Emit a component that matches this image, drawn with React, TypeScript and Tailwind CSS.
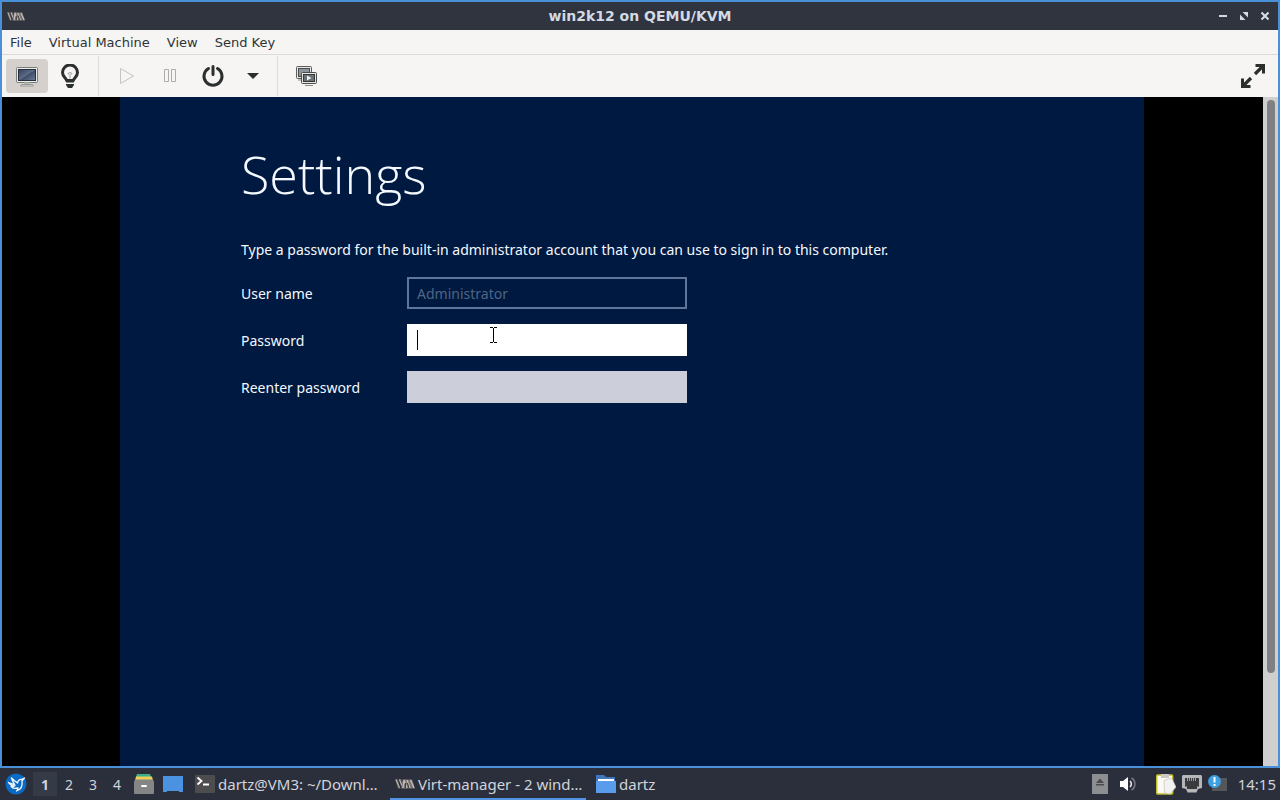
import { useState } from 'react'

const menus = ['File', 'Virtual Machine', 'View', 'Send Key']
const desktops = ['1', '2', '3', '4']

function VmLogo({ className }: { className?: string }) {
  return (
    <svg viewBox="0 0 20 12" className={className} fill="none" aria-hidden="true">
      <path d="M0 1.500h3l2 9h-2zM3.500 1h3l1 6V1.500h3v9h-3z" fill="#5f5b59" />
      <path d="M1 1.500 4.500 10M4.500 1.500 7 8" stroke="#b5b2af" strokeWidth="1.200" />
      <path d="M6 10.500 8 1.500h9l3 9z" fill="#77716d" />
      <path d="M8 10 9 2l3 8M12 2l3 8M15.500 2l3.500 8" stroke="#c3bfbc" strokeWidth="1.300" />
      <path d="M10.500 10V5M14 10.500 12.500 5" stroke="#3d3b3d" />
    </svg>
  )
}

function ConsoleIcon() {
  return (
    <svg viewBox="0 0 24 24" className="w-6 h-6" aria-hidden="true">
      <defs>
        <linearGradient id="screen" x1="0" y1="0" x2="1" y2="1">
          <stop offset="0" stopColor="#33435f" />
          <stop offset="0.5" stopColor="#5d6d86" />
          <stop offset="0.52" stopColor="#3c4c68" />
          <stop offset="1" stopColor="#6d7d96" />
        </linearGradient>
      </defs>
      <rect x="1.500" y="3.500" width="21" height="15" rx="1" fill="#e9eae8" stroke="#7b7d7a" />
      <rect x="3.500" y="5.500" width="17" height="11" fill="url(#screen)" stroke="#27303f" />
      <path d="M9 18.500h6v2H9z" fill="#b7b9b5" />
      <path d="M6.500 20.500h11l1 1.500h-13z" fill="#e2e3e1" stroke="#8a8c88" strokeWidth="0.8" />
    </svg>
  )
}

function BulbIcon() {
  return (
    <svg viewBox="0 0 24 24" className="w-6 h-6" fill="none" aria-hidden="true">
      <path d="M8.700 16.500C8.200 14 4.500 12.500 4.500 8.500a7.500 7.500 0 0 1 15 0c0 4-3.700 5.500-4.200 8z" stroke="#2b302f" strokeWidth="3" strokeLinejoin="round" />
      <path d="M10 9.500l2 2 2-2-2-1zM12 12v2.500" stroke="#8f9190" strokeWidth="0.900" />
      <path d="M8 17h8v1.500H8zM8 20h8v1l-2 3h-4l-2-3z" fill="#2b302f" />
    </svg>
  )
}

function PlayIcon() {
  return (
    <svg viewBox="0 0 24 24" className="w-6 h-6" fill="none" stroke="#c3c3c0" aria-hidden="true">
      <path d="M5.500 4.500v15L18.500 12z" />
    </svg>
  )
}

function PauseIcon() {
  return (
    <svg viewBox="0 0 24 24" className="w-6 h-6" fill="none" stroke="#acadaa" aria-hidden="true">
      <path d="M6.500 5.500h4v12h-4zM13.500 5.500h4v12h-4z" />
    </svg>
  )
}

function PowerIcon() {
  return (
    <svg viewBox="0 0 24 24" className="w-6 h-6" fill="none" stroke="#2b302f" strokeWidth="3" strokeLinecap="round" aria-hidden="true">
      <path d="M7.500 4.500a9 9 0 1 0 9 0M12 2.500v8" />
    </svg>
  )
}

function SnapshotsIcon() {
  return (
    <svg viewBox="0 0 24 24" className="w-6 h-6" aria-hidden="true">
      <rect x="2.500" y="2.500" width="15" height="12" rx="1" fill="#e6e7e5" stroke="#5b5e5b" />
      <rect x="4.500" y="4.500" width="11" height="8" fill="#8e9599" stroke="#4b4f50" />
      <path d="M4 16h4" stroke="#8a8c88" />
      <rect x="7.500" y="8.500" width="15" height="11" rx="1" fill="#e6e7e5" stroke="#4b4e4b" />
      <rect x="9.500" y="10.500" width="11" height="7" fill="#6b7276" stroke="#34393a" />
      <path d="M13 11.500v5l4.500-2.500z" fill="#f2f2f1" />
      <path d="M11 21.500h8" stroke="#8a8c88" />
    </svg>
  )
}

function FullscreenIcon() {
  return (
    <svg viewBox="0 0 26 26" className="w-[26px] h-[26px]" fill="none" stroke="#2b302f" strokeWidth="3" aria-hidden="true">
      <path d="M15 11 23 3M11 15 3 23" strokeWidth="3.200" />
      <path d="M15.500 2.500h8v8M2.500 15.500v8h8" />
    </svg>
  )
}

function StartIcon() {
  return (
    <svg viewBox="0 0 22 22" className="w-[22px] h-[22px]" aria-hidden="true">
      <circle cx="11" cy="11" r="10.500" fill="#0b6bc4" />
      <path
        d="M3.500 9.500c2 1 4.500 1.500 6.500 3C8 8.500 7 7 6.500 5c2 2 4 3.500 6 5 .3-2.500 2-3.800 4-3.500l3-1.500-2.500 2.800c.8 4.500-1 8.500-5.500 10.200 1-1 1.500-2 1.500-3-3 .8-6 0-7-1.500 1 .2 2 .2 3 0-2.500-.8-4.500-2-5.500-4z"
        fill="#0b6bc4"
        stroke="#f3f8fd"
        strokeWidth="1.300"
        strokeLinejoin="round"
      />
    </svg>
  )
}

function FilesIcon() {
  return (
    <svg viewBox="0 0 20 20" className="w-5 h-5" aria-hidden="true">
      <path d="M3 0h13l1 3H2z" fill="#3fae8c" />
      <path d="M2 2.500h16l1 4H1z" fill="#efcf5a" />
      <path d="M1 5.500h18l1 2.500v11a1 1 0 0 1-1 1H1a1 1 0 0 1-1-1V8z" fill="#858585" />
      <rect x="7" y="11" width="6" height="2" rx="1" fill="#fff" />
    </svg>
  )
}

function DesktopIcon() {
  return (
    <svg viewBox="0 0 20 16" className="w-5 h-4" aria-hidden="true">
      <path d="M0 0h20v16h-4v-1H4v1H0z" fill="#4b93e0" />
    </svg>
  )
}

function TerminalIcon() {
  return (
    <svg viewBox="0 0 20 18" className="w-5 h-[18px] shrink-0" fill="none" aria-hidden="true">
      <rect width="20" height="18" rx="1" fill="#4d4d4d" />
      <path d="m2.500 2.500 4 3.500-4 3.500M8 9.500h6" stroke="#fff" strokeWidth="1.800" />
    </svg>
  )
}

function FolderIcon() {
  return (
    <svg viewBox="0 0 20 18" className="w-5 h-[18px] shrink-0" aria-hidden="true">
      <path d="M0 0h8l2 2h9v4H0z" fill="#3f76bd" />
      <path d="M2 4h16v3H2z" fill="#fff" />
      <path d="M0 6h20v12H0z" fill="#5a9cec" />
    </svg>
  )
}

function EjectIcon() {
  return (
    <svg viewBox="0 0 16 20" className="w-4 h-5" aria-hidden="true">
      <rect width="16" height="20" fill="#8d8e90" />
      <path d="m8 4.500 4 4.500H4zM4 10h8v1.500H4z" fill="#4b4c50" />
    </svg>
  )
}

function SpeakerIcon() {
  return (
    <svg viewBox="0 0 16 16" className="w-4 h-4" fill="none" aria-hidden="true">
      <path d="M0 5h3l5-4v14l-5-4H0z" fill="#fff" />
      <path d="M10 5a4 4 0 0 1 0 6" stroke="#e8e8ea" strokeWidth="1.600" />
      <path d="M11.500 2a7 7 0 0 1 0 12" stroke="#76787f" strokeWidth="1.600" />
    </svg>
  )
}

function ClipboardIcon() {
  return (
    <svg viewBox="0 0 20 22" className="w-5 h-[22px]" aria-hidden="true">
      <rect x="0.700" y="2" width="16" height="19" rx="1" fill="#fbfbf3" stroke="#c4bd2c" strokeWidth="1.400" />
      <path d="M5 1h8v4H5z" fill="#c9cac6" />
      <path d="M8 7.500 15.500 5l4.500 9-6 7-5.500-1z" fill="#f2f2f0" stroke="#c3c3bf" strokeWidth="0.700" />
    </svg>
  )
}

function NetworkIcon() {
  return (
    <svg viewBox="0 0 20 18" className="w-5 h-[18px]" aria-hidden="true">
      <path d="M1 0h18l1 1v12l-4 1-1.500 3.500h-9L4 14l-4-1V1z" fill="#b5b6b8" />
      <path d="M3 3h14v8.500h-2V14H5v-2.500H3z" fill="#3a3b3f" />
      <path d="M5.500 3v3M7.500 3v3M9.500 3v3M11.500 3v3M13.500 3v3" stroke="#b5b6b8" strokeWidth="0.800" />
    </svg>
  )
}

function NoticeIcon() {
  return (
    <svg viewBox="0 0 20 18" className="w-5 h-[18px]" aria-hidden="true">
      <rect x="4" y="3" width="15" height="13" fill="#55565a" />
      <circle cx="6.500" cy="6.500" r="6.500" fill="#3fa0e0" />
      <path d="M5.500 2h2v5.500h-2zM5.500 9h2v2h-2z" fill="#fff" />
    </svg>
  )
}

const toolButton = 'w-[42px] h-[34px] flex items-center justify-center rounded-[4px]'

function Separator() {
  return <div className="w-px h-10 mx-1.5 bg-[#dddbd8]" />
}

function TitleBar() {
  return (
    <header className="h-7 px-1 flex items-center bg-[#2f343f] text-[#d3dae3]">
      <div className="flex-1 pl-px">
        <VmLogo className="w-[18px] h-[11px]" />
      </div>
      <h1 className="text-[14px] leading-5 font-bold">win2k12 on QEMU/KVM</h1>
      <div className="flex-1 pr-px flex justify-end gap-1">
        <button aria-label="Minimize" className="w-[17px] h-5 flex items-center justify-center">
          <svg viewBox="0 0 10 10" className="w-2.5 h-2.5"><path d="M1 5h8" stroke="#d3dae3" strokeWidth="2" /></svg>
        </button>
        <button aria-label="Maximize" className="w-[17px] h-5 flex items-center justify-center">
          <svg viewBox="0 0 10 10" className="w-2.5 h-2.5"><path d="M3.500 1H9v5.500zM1 3.500V9h5.500z" fill="#d3dae3" /></svg>
        </button>
        <button aria-label="Close" className="w-[17px] h-5 flex items-center justify-center">
          <svg viewBox="0 0 10 10" className="w-2.5 h-2.5"><path d="m1.500 1.500 7 7M8.500 1.500l-7 7" stroke="#d3dae3" strokeWidth="2.200" /></svg>
        </button>
      </div>
    </header>
  )
}

function Toolbar() {
  return (
    <div className="h-[42px] px-1 flex items-center gap-px">
      <button aria-label="Console" className={`${toolButton} bg-[#d5d0cb]`}><ConsoleIcon /></button>
      <button aria-label="Details" className={toolButton}><BulbIcon /></button>
      <Separator />
      <button aria-label="Run" disabled className={toolButton}><PlayIcon /></button>
      <button aria-label="Pause" className={toolButton}><PauseIcon /></button>
      <button aria-label="Shut down" className={toolButton}><PowerIcon /></button>
      <button aria-label="Shut down options" className="w-[35px] h-[34px] flex items-center justify-center">
        <svg viewBox="0 0 12 6" className="w-3 h-1.5"><path d="M0 0h12L6 6z" fill="#2b302f" /></svg>
      </button>
      <Separator />
      <button aria-label="Snapshots" className={toolButton}><SnapshotsIcon /></button>
      <button aria-label="Full screen" className={`${toolButton} ml-auto`}><FullscreenIcon /></button>
    </div>
  )
}

function GuestScreen() {
  const [password, setPassword] = useState('')
  const [confirm, setConfirm] = useState('')

  return (
    <main className="w-full max-w-[1024px] mx-auto bg-[#001940] text-[#f4f8ff] px-[121px] pt-[43px] font-['Noto_Sans','Open_Sans',sans-serif]">
      <h2 className="text-[52px] leading-[68px] font-light font-['Open_Sans','Noto_Sans',sans-serif]">Settings</h2>
      <p className="mt-7 text-[14px] leading-7">
        Type a password for the built-in administrator account that you can use to sign in to this computer.
      </p>
      <form className="mt-[13px] grid grid-cols-[166px_280px] gap-y-[15px] items-center text-[14px]">
        <label htmlFor="user">User name</label>
        <input
          id="user"
          disabled
          value="Administrator"
          className="h-8 w-full px-2 border-2 border-[#5f7599] bg-transparent text-[#4f6486]"
        />
        <label htmlFor="password">Password</label>
        <div className="relative">
          <input
            id="password"
            type="password"
            value={password}
            onChange={(e) => setPassword(e.target.value)}
            className="block h-8 w-full px-2.5 bg-white text-black outline-none"
          />
          {password === '' && <span className="absolute left-2.5 top-1.5 w-px h-5 bg-black" />}
          {/* mouse pointer */}
          <svg viewBox="0 0 7 16" className="absolute left-[83px] top-[3px] w-[7px] h-4" fill="none" stroke="#000" aria-hidden="true">
            <path d="M0 .5h3M4 .5h3M3.500 1v14M0 15.500h3M4 15.500h3" />
          </svg>
        </div>
        <label htmlFor="confirm">Reenter password</label>
        <input
          id="confirm"
          type="password"
          value={confirm}
          onChange={(e) => setConfirm(e.target.value)}
          className="h-8 w-full px-2.5 bg-[#cccfd9] text-black outline-none"
        />
      </form>
    </main>
  )
}

function Taskbar() {
  return (
    <footer className="h-8 pl-[5px] pr-1 flex items-center bg-[#2b2f3b] text-[#d0d4dc] text-[15px] font-['Noto_Sans','Open_Sans',sans-serif]">
      <button aria-label="Application menu"><StartIcon /></button>
      <nav className="ml-1.5 flex text-[14px]">
        {desktops.map((d) => (
          <button
            key={d}
            className={`w-6 h-6 ${d === '1' ? 'font-bold bg-[#353a47]' : ''}`}
          >
            {d}
          </button>
        ))}
      </nav>
      <div className="ml-[5px] flex items-center gap-[9px]">
        <button aria-label="File manager"><FilesIcon /></button>
        <button aria-label="Show desktop"><DesktopIcon /></button>
      </div>
      <div className="ml-[7px] flex h-full">
        <button className="w-[196px] px-[5px] flex items-center gap-[3px] border-y-2 border-transparent whitespace-nowrap">
          <TerminalIcon />
          <span>dartz@VM3: ~/Downl…</span>
        </button>
        <button className="w-[196px] ml-1 px-[5px] flex items-center gap-[3px] border-y-2 border-t-transparent border-b-[#5294e2] whitespace-nowrap">
          <VmLogo className="w-5 h-3 shrink-0" />
          <span>Virt-manager - 2 wind…</span>
        </button>
        <button className="ml-[5px] px-[5px] flex items-center gap-[3px] border-y-2 border-transparent">
          <FolderIcon />
          <span>dartz</span>
        </button>
      </div>
      <div className="ml-auto flex items-center">
        <EjectIcon />
        <div className="ml-3"><SpeakerIcon /></div>
        <div className="ml-5 mr-2.5 flex items-center gap-1.5">
          <ClipboardIcon />
          <NetworkIcon />
          <NoticeIcon />
        </div>
        <time>14:15</time>
      </div>
    </footer>
  )
}

export default function App() {
  return (
    <div className="min-h-screen flex flex-col">
      <div className="flex-1 flex flex-col border-2 border-[#4a90d9] bg-[#f6f5f4] font-['DejaVu_Sans',sans-serif]">
        <TitleBar />
        <nav className="h-[25px] pt-0.5 flex items-center gap-px border-b border-[#dcdad7] text-[13px] text-[#2e3436]">
          {menus.map((m) => (
            <button key={m} className="px-2">{m}</button>
          ))}
        </nav>
        <Toolbar />
        <div className="flex-1 flex bg-black">
          <div className="flex-1 flex pr-px">
            <GuestScreen />
          </div>
          <div className="w-[15px] pl-1 pr-[3px] pt-[3px] bg-[#cfcfcf]">
            <div className="h-[86%] rounded-full bg-[#7e8082]" />
          </div>
        </div>
      </div>
      <Taskbar />
    </div>
  )
}
